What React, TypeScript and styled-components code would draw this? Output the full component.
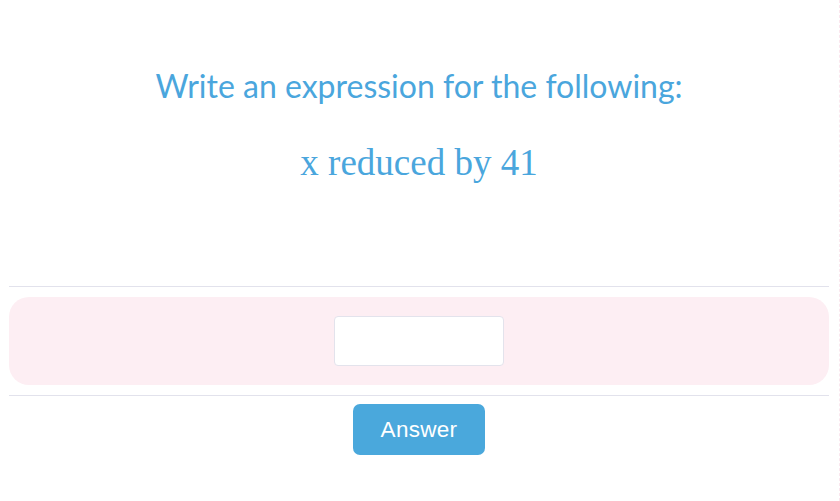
import React from "react";
import styled, { createGlobalStyle } from "styled-components";

const Global = createGlobalStyle`
  html, body { margin: 0; padding: 0; background: #ffffff; }
  body { font-family: "Liberation Sans", Arial, sans-serif; }
`;

const Page = styled.div`
  width: 840px;
  height: 501px;
  box-sizing: border-box;
  padding: 0 10px 0 9px;
  border-right: 1px dashed #fbe6ee;
`;

const Question = styled.div`
  height: 286px;
  display: flex;
  flex-direction: column;
  align-items: center;
  padding-top: 65px;
  box-sizing: border-box;
`;

const Title = styled.h1`
  margin: 0;
  font-family: "Lato", "Open Sans", sans-serif;
  font-weight: 400;
  font-size: 32px;
  line-height: 42px;
  color: #4aa6dd;
`;

const Prompt = styled.div`
  margin-top: 34px;
  font-family: "Liberation Serif", "Times New Roman", serif;
  font-size: 37px;
  line-height: 44px;
  color: #4aa6dd;
`;

const Divider = styled.hr`
  margin: 0;
  border: 0;
  border-top: 1px solid #e2e2ec;
`;

const AnswerBox = styled.div`
  margin: 10px 0;
  height: 88px;
  background: #fdeef3;
  border-radius: 20px;
  display: flex;
  align-items: center;
  justify-content: center;
`;

const Input = styled.input`
  width: 170px;
  height: 50px;
  box-sizing: border-box;
  border: 1px solid #e3e3ec;
  border-radius: 4px;
  background: #fff;
  outline: none;
  margin-right: 1px;
`;

const Actions = styled.div`
  display: flex;
  justify-content: center;
  padding-top: 8px;
`;

const Button = styled.button`
  width: 132px;
  height: 51px;
  border: 0;
  border-radius: 7px;
  background: #4aa8dc;
  color: #fff;
  font-family: "Liberation Sans", Arial, sans-serif;
  font-size: 22.5px;
  letter-spacing: 0.3px;
  cursor: pointer;
  padding: 0;
`;

export default function App() {
  return (
    <>
      <Global />
      <Page>
        <Question>
          <Title>Write an expression for the following:</Title>
          <Prompt>x reduced by 41</Prompt>
        </Question>
        <Divider />
        <AnswerBox>
          <Input type="text" />
        </AnswerBox>
        <Divider />
        <Actions>
          <Button>Answer</Button>
        </Actions>
      </Page>
    </>
  );
}
